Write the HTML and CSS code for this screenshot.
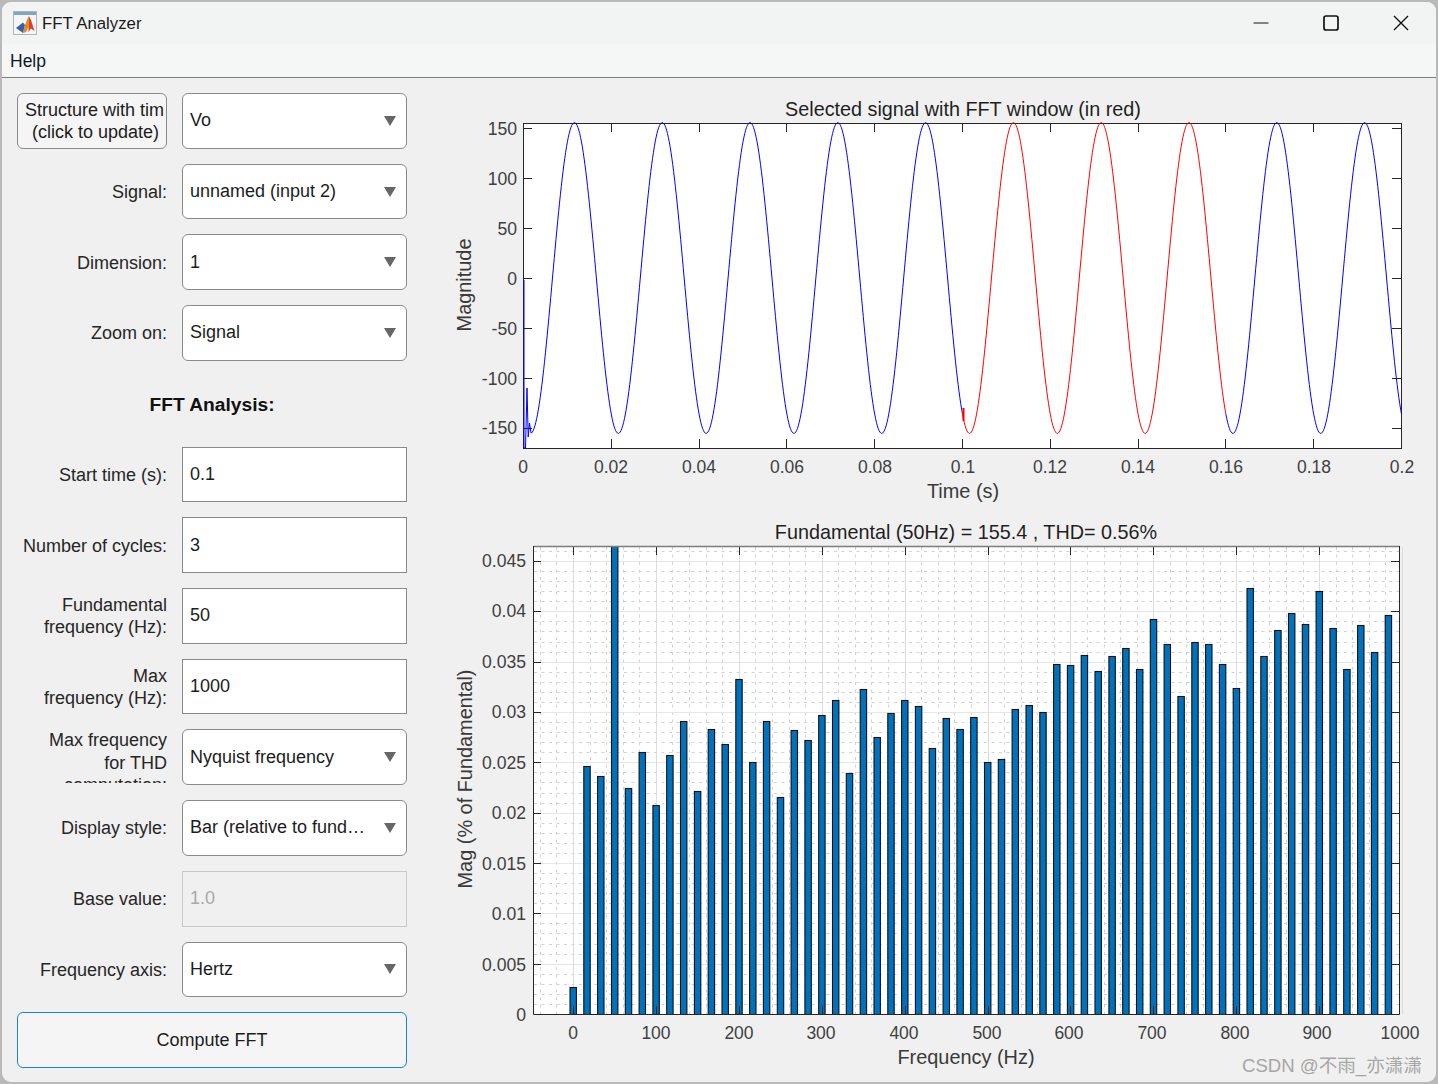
FILE: index.html
```html
<!DOCTYPE html>
<html lang="en">
<head>
<meta charset="utf-8">
<title>FFT Analyzer</title>
<link rel="stylesheet" href="styles.css">
</head>
<body>
<div class="window">
  <header class="titlebar">
    <svg class="app-icon" viewBox="0 0 24 24" width="24" height="24">
      <rect x="0.5" y="0.5" width="23" height="23" fill="#f4f6f8" stroke="#b0b5ba"/>
      <rect x="1" y="1" width="22" height="3" fill="#7da4c9"/>
      <path d="M3 17 L10 11.5 L12 14 L10 22 Z" fill="#2f62aa"/>
      <path d="M10 22 L12 14 L15.7 5 L15.5 16 L13 21 Z" fill="#e8871e"/>
      <path d="M15.7 5 L18 9 L21.5 20 L18 17.5 L15.5 21 L15.5 16 Z" fill="#d9431e"/>
    </svg>
    <span class="app-title">FFT Analyzer</span>
    <div class="win-controls">
      <span class="win-btn"><svg viewBox="0 0 16 16" width="16" height="16"><path d="M0.5 8H15.5" class="glyph"/></svg></span>
      <span class="win-btn"><svg viewBox="0 0 16 16" width="16" height="16"><rect x="1" y="1" width="14" height="14" rx="2" class="glyph glyph-heavy"/></svg></span>
      <span class="win-btn"><svg viewBox="0 0 16 16" width="16" height="16"><path d="M1 1L15 15M15 1L1 15" class="glyph glyph-mid"/></svg></span>
    </div>
  </header>
  <nav class="menubar"><span>Help</span></nav>

  <main class="content">
    <section class="panel">
      <button class="btn-struct"><span class="struct-a">Structure with tim</span><span class="struct-b">(click to update)</span></button>
      <div class="dd"><span class="dd-text">Vo</span><i class="caret"></i></div>

      <label class="lbl">Signal:</label>
      <div class="dd"><span class="dd-text">unnamed (input 2)</span><i class="caret"></i></div>

      <label class="lbl">Dimension:</label>
      <div class="dd"><span class="dd-text">1</span><i class="caret"></i></div>

      <label class="lbl">Zoom on:</label>
      <div class="dd"><span class="dd-text">Signal</span><i class="caret"></i></div>

      <h2 class="section-head">FFT Analysis:</h2>

      <label class="lbl">Start time (s):</label>
      <div class="field">0.1</div>

      <label class="lbl">Number of cycles:</label>
      <div class="field">3</div>

      <label class="lbl">Fundamental<br>frequency (Hz):</label>
      <div class="field">50</div>

      <label class="lbl">Max<br>frequency (Hz):</label>
      <div class="field">1000</div>

      <label class="lbl lbl-clip"><span>Max frequency<br>for THD<br>computation:</span></label>
      <div class="dd"><span class="dd-text">Nyquist frequency</span><i class="caret"></i></div>

      <label class="lbl">Display style:</label>
      <div class="dd"><span class="dd-text">Bar (relative to fundamental)</span><i class="caret"></i></div>

      <label class="lbl">Base value:</label>
      <div class="field field-off">1.0</div>

      <label class="lbl">Frequency axis:</label>
      <div class="dd"><span class="dd-text">Hertz</span><i class="caret"></i></div>

      <button class="btn-compute">Compute FFT</button>
    </section>

    <section class="plots">
      <svg class="plot plot-top" viewBox="440 90 996 420" width="996" height="420">
        <rect x="523" y="123" width="878" height="325" fill="#fff"/>
        <g id="ticks-a"></g>
        <rect x="523.5" y="123.5" width="878" height="325" class="frame"/>
        <g id="signal"></g>
        <text class="ttl" x="963" y="116">Selected signal with FFT window (in red)</text>
        <g class="yt">
          <text x="517" y="135">150</text><text x="517" y="185">100</text><text x="517" y="235">50</text>
          <text x="517" y="285">0</text><text x="517" y="335">-50</text><text x="517" y="385">-100</text><text x="517" y="434">-150</text>
        </g>
        <g class="xt">
          <text x="523" y="473">0</text><text x="611" y="473">0.02</text><text x="699" y="473">0.04</text>
          <text x="787" y="473">0.06</text><text x="875" y="473">0.08</text><text x="963" y="473">0.1</text>
          <text x="1050" y="473">0.12</text><text x="1138" y="473">0.14</text><text x="1226" y="473">0.16</text>
          <text x="1314" y="473">0.18</text><text x="1402" y="473">0.2</text>
        </g>
        <text class="axl" x="963" y="498">Time (s)</text>
        <text class="axl" transform="translate(471 285) rotate(-90)">Magnitude</text>
      </svg>

      <svg class="plot plot-bottom" viewBox="440 515 996 560" width="996" height="560">
        <defs><clipPath id="bar-clip"><rect x="533" y="546" width="867" height="469"/></clipPath></defs>
        <rect x="533" y="546" width="867" height="468" fill="#fff"/>
        <g id="grid"></g>
        <g id="bars" clip-path="url(#bar-clip)"></g>
        <g id="ticks-b"></g>
        <path d="M533.5 546.5H1399.5" class="frame-top"/>
        <path d="M533.5 546V1014.5H1399.5V546" class="frame"/>
        <text class="ttl" x="966" y="539">Fundamental (50Hz) = 155.4 , THD= 0.56%</text>
        <g class="yt">
          <text x="526" y="567">0.045</text><text x="526" y="617">0.04</text><text x="526" y="668">0.035</text>
          <text x="526" y="718">0.03</text><text x="526" y="769">0.025</text><text x="526" y="819">0.02</text>
          <text x="526" y="870">0.015</text><text x="526" y="920">0.01</text><text x="526" y="971">0.005</text><text x="526" y="1021">0</text>
        </g>
        <g class="xt">
          <text x="573" y="1039">0</text><text x="656" y="1039">100</text><text x="739" y="1039">200</text>
          <text x="821" y="1039">300</text><text x="904" y="1039">400</text><text x="987" y="1039">500</text>
          <text x="1069" y="1039">600</text><text x="1152" y="1039">700</text><text x="1235" y="1039">800</text>
          <text x="1317" y="1039">900</text><text x="1400" y="1039">1000</text>
        </g>
        <text class="axl" x="966" y="1064">Frequency (Hz)</text>
        <text class="axl" transform="translate(472 779) rotate(-90)">Mag (% of Fundamental)</text>
      </svg>
    </section>
  </main>
  <div class="watermark">CSDN @不雨_亦潇潇</div>
</div>
<script src="chart.js"></script>
</body>
</html>
```
FILE: styles.css
```css
* { box-sizing: border-box; }
html, body { margin: 0; height: 100%; }
body {
  background: #b9b9b9;
  padding: 2px;
  font-family: "Liberation Sans", Arial, sans-serif;
  overflow: hidden;
}
.window {
  position: relative;
  width: 1434px;
  height: 1080px;
  background: #f0f0f0;
  border-radius: 9px;
  overflow: hidden;
  display: flex;
  flex-direction: column;
}
.titlebar {
  height: 42px;
  flex: none;
  display: flex;
  align-items: center;
  background: #f2f4f3;
  padding-left: 11px;
}
.app-icon { flex: none; }
.app-title { margin-left: 5px; padding-top: 1px; font-size: 16.8px; color: #1a1a1a; }
.win-controls { margin-left: auto; display: flex; }
.win-btn { width: 70px; height: 42px; display: flex; align-items: center; justify-content: center; }
.glyph { fill: none; stroke: #111; stroke-width: 1.1; }
.glyph-heavy { stroke-width: 1.7; }
.glyph-mid { stroke-width: 1.4; }
.menubar {
  height: 34px;
  flex: none;
  background: #f5f6f6;
  border-bottom: 1px solid #7d7d7d;
  padding: 2px 0 0 8px;
  display: flex;
  align-items: center;
  font-size: 17.5px;
  color: #101828;
}
.content { flex: 1; display: flex; min-height: 0; }
.panel {
  flex: none;
  width: 390px;
  height: 975px;
  margin: 15px 0 0 15px;
  display: grid;
  grid-template-columns: 150px 225px;
  grid-template-rows: repeat(14, 1fr);
  column-gap: 15px;
  row-gap: 15px;
  font-size: 18px;
  color: #262626;
}
.lbl {
  display: flex;
  align-items: center;
  justify-content: flex-end;
  text-align: right;
  line-height: 22px;
  padding-top: 1px;
  overflow: hidden;
  white-space: nowrap;
}
.lbl-clip { align-items: flex-start; padding-top: 0; height: 54px; line-height: 22.5px; }
.dd, .field {
  background: #fff;
  border: 1px solid #8a8a8a;
  display: flex;
  align-items: center;
  padding-left: 7px;
  color: #1c1c1c;
}
.dd { border-radius: 6px; padding-right: 10px; }
.dd-text { flex: 1; min-width: 0; white-space: nowrap; overflow: hidden; text-overflow: ellipsis; padding-right: 18px; }
.caret {
  flex: none;
  width: 0;
  height: 0;
  border-left: 6px solid transparent;
  border-right: 6px solid transparent;
  border-top: 10px solid #666;
}
.field-off { background: #f0f0f0; border-color: #c9c9c9; color: #a9a9a9; }
.section-head {
  grid-column: 1 / -1;
  margin: 0;
  padding-top: 3px;
  align-self: center;
  text-align: center;
  font-size: 19.2px;
  font-weight: 700;
  color: #111;
}
.btn-struct, .btn-compute { font: inherit; color: #1c1c1c; border-radius: 6px; background: #f5f5f5; padding: 0; }
.btn-struct {
  border: 1px solid #8a8a8a;
  display: flex;
  flex-direction: column;
  justify-content: center;
  line-height: 22px;
  padding: 0 3px 0 7px;
  overflow: hidden;
}
.struct-a, .struct-b { display: block; white-space: nowrap; text-align: center; }
.struct-b { padding-left: 3px; }
.btn-compute { grid-column: 1 / -1; border: 1px solid #1a86d2; }
.plots { flex: none; margin: 12px 0 0 33px; display: flex; flex-direction: column; gap: 5px; width: 996px; }
.plot { display: block; flex: none; overflow: visible; }
.frame { fill: none; stroke: #262626; stroke-width: 1; }
.frame-top { stroke: #7c7c7c; stroke-width: 1.4; fill: none; }
.ttl { font-size: 19.8px; text-anchor: middle; fill: #1f1f1f; }
.axl { font-size: 19.9px; text-anchor: middle; fill: #3a3a3a; }
.yt text { font-size: 17.6px; text-anchor: end; fill: #404040; }
.xt text { font-size: 17.5px; text-anchor: middle; fill: #404040; }
.watermark {
  position: absolute;
  right: 14px;
  bottom: 5px;
  font-family: "Liberation Sans", "Noto Sans CJK SC", sans-serif;
  font-size: 18.6px;
  color: #a6a6a6;
}
```
FILE: chart.js
```js
var NS = "http://www.w3.org/2000/svg";
function add(parent, tag, attrs) {
  var el = document.createElementNS(NS, tag);
  for (var k in attrs) el.setAttribute(k, attrs[k]);
  parent.appendChild(el);
  return el;
}
function tick(g, d) { add(g, "path", { d: d, fill: "none", stroke: "#262626", "stroke-width": 1 }); }

/* signal plot */
(function () {
  var g = document.getElementById("signal");
  var X = function (t) { return 523.5 + t * 4390; };
  var Y = function (v) { return 278 - v; };
  function wave(a, b) {
    var pts = [];
    for (var t = a; t <= b + 1e-9; t += 0.0002) {
      pts.push(X(t).toFixed(2) + "," + Y(155.4 * Math.cos(2 * Math.PI * 50 * (t - 0.0116))).toFixed(2));
    }
    return pts.join(" ");
  }
  add(g, "polyline", { points: "524,280 524,448 525.5,448 527,388 528.2,437 529.5,423 531,433 " + wave(0.0018, 0.1), fill: "none", stroke: "#00f", "stroke-width": 1 });
  add(g, "polyline", { points: wave(0.16, 0.2), fill: "none", stroke: "#00f", "stroke-width": 1 });
  add(g, "polyline", { points: wave(0.1, 0.16), fill: "none", stroke: "#f00", "stroke-width": 1 });
  add(g, "path", { d: "M963.5 408V421", stroke: "#f00", "stroke-width": 2 });
  var t = document.getElementById("ticks-a");
  for (var i = 1; i < 10; i++) {
    var x = Math.round(523 + i * 87.8) + 0.5;
    tick(t, "M" + x + " 123V132M" + x + " 448V439");
  }
  for (var j = 0; j < 7; j++) {
    var y = 128.5 + j * 50;
    tick(t, "M523 " + y + "H532M1401 " + y + "H1392");
  }
})();

/* spectrum plot */
(function () {
  var tops = [987,766,776,540,788,752,805,755,721,791,729,744,679,762,721,797,730,740,715,700,
    773,689,737,713,700,706,748,718,729,717,762,759,709,705,712,664,665,655,671,656,
    648,669,619,644,696,642,644,664,688,588,656,630,613,624,591,628,669,625,652,615];
  var X0 = 573, DX = 0.829;
  var grid = document.getElementById("grid");
  var i, y, x;
  for (i = 0; i <= 47; i++) {
    y = Math.round(1014 - i * 10.067) + 0.5;
    if (y < 547 || i % 5 === 0) continue;
    add(grid, "path", { d: "M534 " + y + "H1399", stroke: "#d2d2d2", "stroke-width": 1, "stroke-dasharray": "3 4.5" });
  }
  for (i = -2; i <= 50; i++) {
    x = Math.round(X0 + i * 16.58) + 0.5;
    if (i % 5 === 0) continue;
    add(grid, "path", { d: "M" + x + " 547V1014", stroke: "#d2d2d2", "stroke-width": 1, "stroke-dasharray": "3 4.5" });
  }
  for (i = 1; i <= 9; i++) {
    y = Math.round(1014 - i * 50.33) + 0.5;
    add(grid, "path", { d: "M534 " + y + "H1399", stroke: "#e6e6e6", "stroke-width": 1 });
  }
  for (i = 0; i <= 10; i++) {
    x = Math.round(X0 + i * 82.9) + 0.5;
    add(grid, "path", { d: "M" + x + " 547V1014", stroke: "#dcdcdc", "stroke-width": 1 });
  }
  var bars = document.getElementById("bars");
  tops.forEach(function (top, n) {
    var cx = X0 + n * 16.667 * DX;
    add(bars, "rect", { x: (cx - 3).toFixed(1), y: top + 0.5, width: 6.4, height: 1014 - top, fill: "#0072bd", stroke: "#111", "stroke-width": 1.1 });
  });
  var t = document.getElementById("ticks-b");
  for (i = 0; i <= 9; i++) {
    x = Math.round(X0 + i * 82.9) + 0.5;
    tick(t, "M" + x + " 547V555M" + x + " 1014V1006");
  }
  for (i = 1; i <= 9; i++) {
    y = Math.round(1014 - i * 50.33) + 0.5;
    tick(t, "M533 " + y + "H541M1399 " + y + "H1391");
  }
})();
```
